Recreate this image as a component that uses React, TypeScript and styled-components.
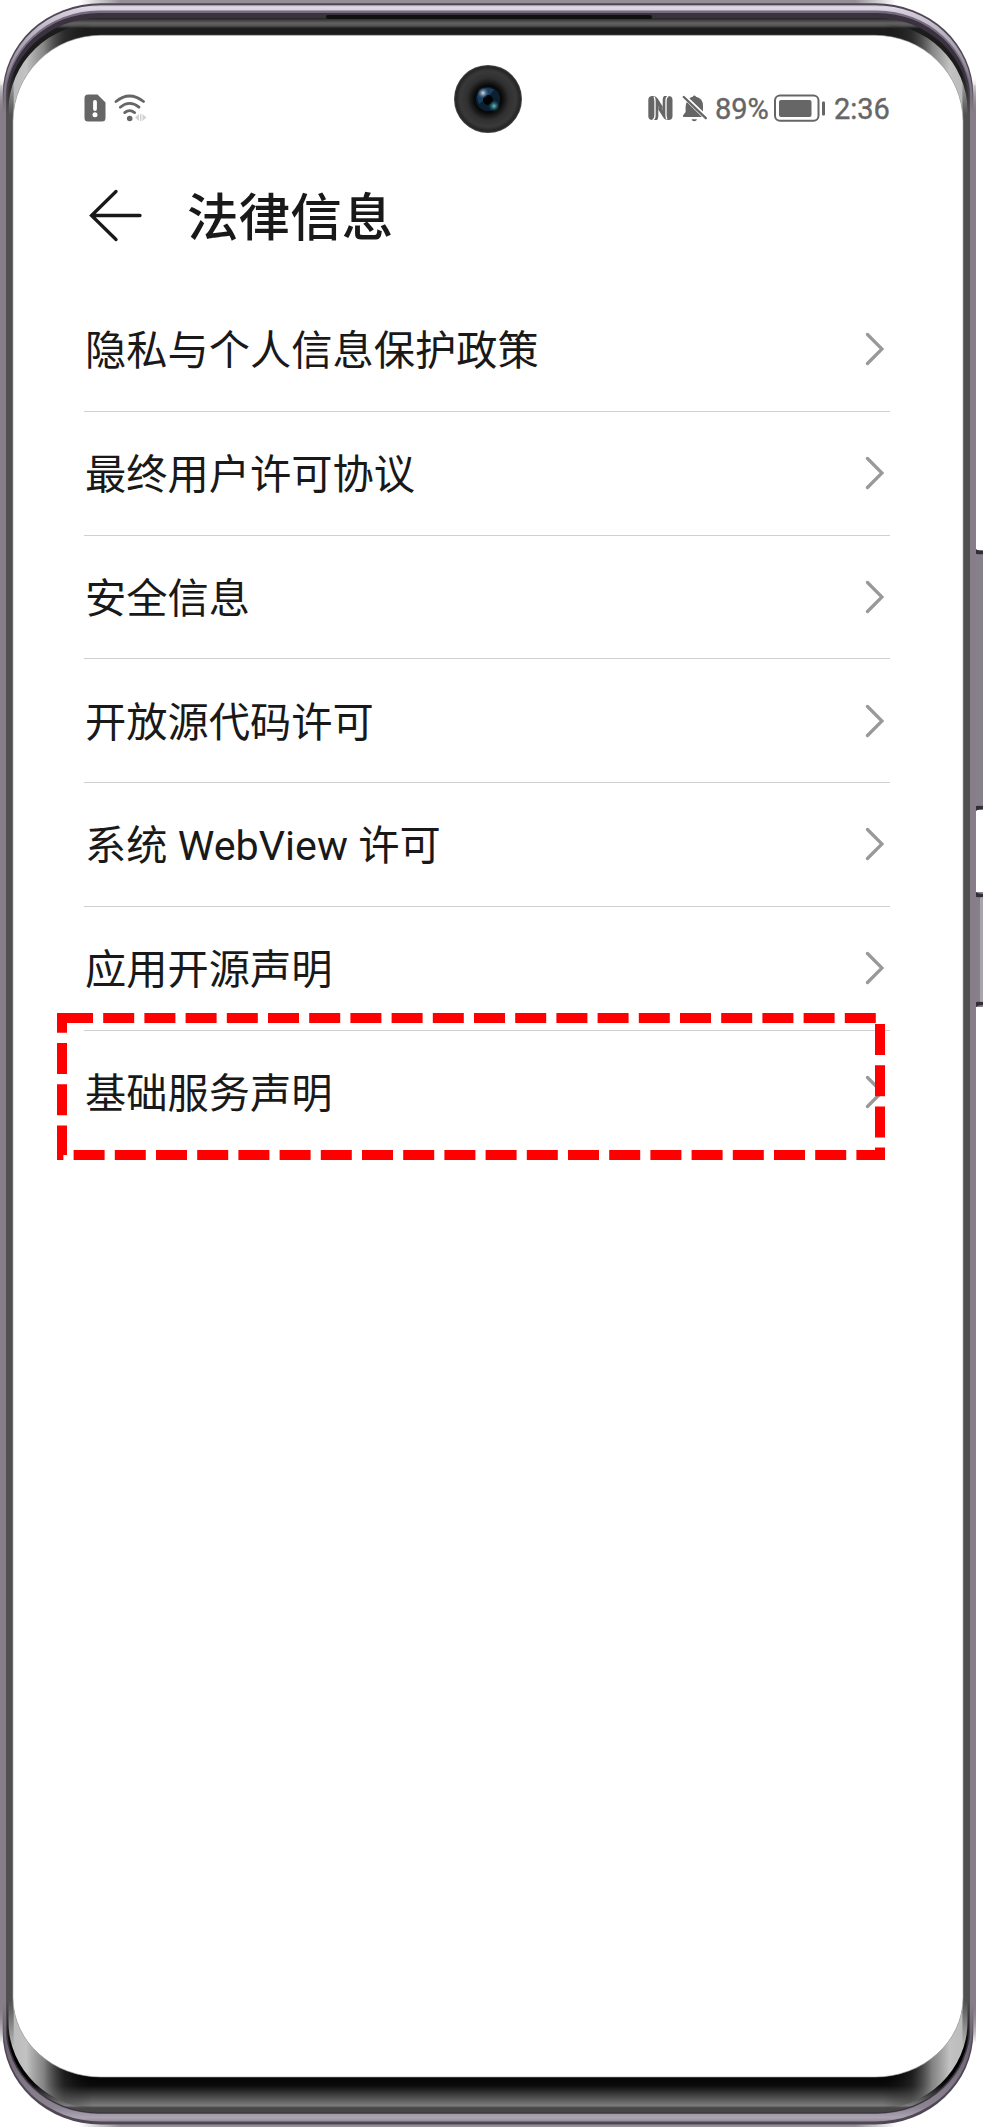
import React from "react";
import styled, { createGlobalStyle } from "styled-components";

const GlobalStyle = createGlobalStyle`
  html, body { margin: 0; padding: 0; background: #fff; }
  body { font-family: Roboto, "Noto Sans CJK SC", sans-serif; color: #191919; overflow: hidden; }
`;

const Phone = styled.main`
  position: relative;
  width: 983px;
  height: 2127px;
  overflow: hidden;
`;

const Shell = styled.svg`
  position: absolute;
  inset: 0;
  display: block;
`;

const Screen = styled.div`
  position: relative;
  box-sizing: border-box;
  width: 976px;
  padding: 91px 86px 0 84px;
`;

const StatusBar = styled.header`
  display: flex;
  justify-content: space-between;
  height: 34px;
`;

const StatusGroup = styled.div`
  display: flex;
  align-items: center;
`;

const StatusIcon = styled.svg<{ $gap?: number }>`
  display: block;
  flex: none;
  margin-right: ${(p) => p.$gap ?? 0}px;
`;

const StatusText = styled.span<{ $width: number }>`
  width: ${(p) => p.$width}px;
  padding-top: 2px;
  font-size: 29px;
  line-height: 34px;
  color: #666;
  -webkit-text-stroke: 0.4px #666;
  white-space: nowrap;
`;

const TitleBar = styled.div`
  display: flex;
  align-items: center;
  height: 80px;
  margin-top: 51px;
`;

const BackIcon = styled.svg`
  display: block;
  flex: none;
  margin-right: 45px;
`;

const Title = styled.h1`
  margin: 0;
  padding-top: 6px;
  font-size: 51.6px;
  font-weight: 500;
  line-height: 80px;
`;

const List = styled.ul`
  list-style: none;
  margin: 32px 0 0;
  padding: 0;
`;

const Row = styled.li`
  box-sizing: border-box;
  display: flex;
  align-items: center;
  justify-content: space-between;
  height: 123.75px;
  padding: 0 6px 0 1px;
  border-bottom: 1px solid #d0d0d0;
  &:last-child { border-bottom: 0; }
`;

const Label = styled.span`
  padding-top: 4px;
  font-size: 41.25px;
  line-height: 60px;
  white-space: nowrap;
`;

const Highlight = styled.svg`
  position: absolute;
  left: 57px;
  top: 1013px;
`;

const Lens = styled.svg`
  position: absolute;
  left: 452px;
  top: 63px;
`;

const items = [
  "隐私与个人信息保护政策",
  "最终用户许可协议",
  "安全信息",
  "开放源代码许可",
  "系统 WebView 许可",
  "应用开源声明",
  "基础服务声明",
];

/* Closed outline of one layer of the case, symmetric about x = 488. */
function outline(l: number, t: number, b: number, rx: number, rt: number, rb: number) {
  const r = 976 - l;
  return `M${l + rx} ${t}H${r - rx}A${rx} ${rt} 0 0 1 ${r} ${t + rt}V${b - rb}A${rx} ${rb} 0 0 1 ${r - rx} ${b}H${l + rx}A${rx} ${rb} 0 0 1 ${l} ${b - rb}V${t + rt}A${rx} ${rt} 0 0 1 ${l + rx} ${t}Z`;
}

function PhoneShell() {
  return (
    <Shell width="983" height="2127" viewBox="0 0 983 2127" aria-hidden="true">
      <defs>
        <linearGradient id="edge" gradientUnits="userSpaceOnUse" x1="80" y1="0" x2="896" y2="0">
          <stop offset="0" stopColor="#948e96" stopOpacity="0" />
          <stop offset=".05" stopColor="#948e96" />
          <stop offset=".95" stopColor="#948e96" />
          <stop offset="1" stopColor="#948e96" stopOpacity="0" />
        </linearGradient>
        <linearGradient id="bulge" gradientUnits="userSpaceOnUse" x1="0" y1="78" x2="0" y2="2044">
          <stop offset="0" stopColor="#857d87" stopOpacity="0" />
          <stop offset=".018" stopColor="#857d87" />
          <stop offset=".98" stopColor="#857d87" />
          <stop offset="1" stopColor="#857d87" stopOpacity="0" />
        </linearGradient>
        <linearGradient id="silver" gradientUnits="userSpaceOnUse" x1="0" y1="0" x2="976" y2="0">
          <stop offset="0" stopColor="#b5b5b5" />
          <stop offset=".027" stopColor="#c2c2c2" />
          <stop offset=".045" stopColor="#999" stopOpacity=".85" />
          <stop offset=".066" stopColor="#444" stopOpacity=".4" />
          <stop offset=".095" stopColor="#111" stopOpacity="0" />
          <stop offset=".905" stopColor="#111" stopOpacity="0" />
          <stop offset=".934" stopColor="#444" stopOpacity=".4" />
          <stop offset=".955" stopColor="#999" stopOpacity=".85" />
          <stop offset=".973" stopColor="#c2c2c2" />
          <stop offset="1" stopColor="#b5b5b5" />
        </linearGradient>
        <linearGradient id="inner" gradientUnits="userSpaceOnUse" x1="0" y1="18" x2="0" y2="2113">
          <stop offset="0" stopColor="#222" />
          <stop offset=".0024" stopColor="#626262" />
          <stop offset=".0036" stopColor="#555" />
          <stop offset=".005" stopColor="#1c1c1c" />
          <stop offset=".98" stopColor="#000" />
          <stop offset=".987" stopColor="#0b0b0b" />
          <stop offset=".9965" stopColor="#7c7c7c" />
          <stop offset=".9975" stopColor="#484848" />
          <stop offset="1" stopColor="#444" />
        </linearGradient>
        <linearGradient id="side" gradientUnits="userSpaceOnUse" x1="0" y1="72" x2="0" y2="2048">
          <stop offset="0" stopColor="#505050" stopOpacity="0" />
          <stop offset=".022" stopColor="#505050" />
          <stop offset=".976" stopColor="#505050" />
          <stop offset="1" stopColor="#505050" stopOpacity="0" />
        </linearGradient>
        <linearGradient id="shine" gradientUnits="userSpaceOnUse" x1="0" y1="5" x2="0" y2="2122">
          <stop offset="0" stopColor="#b9b1bf" />
          <stop offset=".001" stopColor="#e0d9e6" />
          <stop offset=".003" stopColor="#d4ccda" />
          <stop offset=".02" stopColor="#aaa2b1" />
          <stop offset=".045" stopColor="#70687a" />
          <stop offset=".96" stopColor="#675d6b" />
          <stop offset=".993" stopColor="#8d8492" />
          <stop offset=".998" stopColor="#aba4b2" />
          <stop offset="1" stopColor="#8e8695" />
        </linearGradient>
        <clipPath id="ring"><path clipRule="evenodd" d={outline(8.5, 23, 2109, 91, 88, 87) + outline(13, 35.3, 2077, 88, 86, 79)} /></clipPath>
      </defs>
      <rect x="80" y="0" width="816" height="7" fill="url(#edge)" />
      <rect x="80" y="2120" width="816" height="7" fill="url(#edge)" />
      <rect x="0" y="78" width="976" height="1966" fill="url(#bulge)" />
      <g fill="#85808a">
        <rect x="973" y="550" width="10" height="260" />
        <rect x="973" y="892" width="10" height="115" />
        <rect x="980" y="896" width="3" height="107" fill="#aaa4ae" />
      </g>
      <g fill="#342d38">
        <path d="M975 548q2 3 8 3v3q-7 1-8-1zM975 812q2-3 8-3v-3q-7-1-8 1z" />
        <path d="M975 891q2 3 8 3v3q-7 1-8-1zM975 1008q2-3 8-3v-3q-7-1-8 1z" />
      </g>
      <path d={outline(2.7, 3.2, 2124.5, 98, 91, 92)} fill="#4f4754" />
      <path d={outline(3.8, 5.2, 2121.5, 97, 90, 90)} fill="url(#shine)" />
      <path d={outline(5.1, 10.5, 2114, 94, 88, 86)} fill="#746b7c" />
      <path d={outline(5.7, 13, 2113.5, 93, 87, 86)} fill="#3a323f" />
      <path d={outline(7, 18, 2112.5, 92, 87, 86)} fill="url(#inner)" />
      <rect x="8" y="20" width="960" height="2092" fill="url(#silver)" clipPath="url(#ring)" />
      <rect x="0" y="85" width="6.3" height="1956" fill="url(#bulge)" />
      <rect x="969.7" y="85" width="6.3" height="1956" fill="url(#bulge)" />
      <rect x="6.2" y="72" width="7.5" height="1976" fill="url(#side)" />
      <rect x="962.4" y="72" width="7.3" height="1976" fill="url(#side)" />
      <path d={outline(13, 35.3, 2077, 88, 86, 79)} fill="#fff" stroke="#aaa" strokeWidth=".6" />
      <rect x="326" y="15" width="326" height="4" rx="2" fill="#101010" />
    </Shell>
  );
}

function Camera() {
  return (
    <Lens width="72" height="72" viewBox="-36 -36 72 72" aria-hidden="true">
      <defs>
        <radialGradient id="lens">
          <stop offset="0" stopColor="#020405" />
          <stop offset=".4" stopColor="#090909" />
          <stop offset=".62" stopColor="#303030" />
          <stop offset=".82" stopColor="#393939" />
          <stop offset=".95" stopColor="#242424" />
          <stop offset="1" stopColor="#505050" />
        </radialGradient>
        <radialGradient id="glint"><stop stopColor="#e2e2ee" /><stop offset="1" stopColor="#335f8a" stopOpacity="0" /></radialGradient>
        <radialGradient id="teal"><stop stopColor="#6cc4c8" /><stop offset="1" stopColor="#14505c" stopOpacity="0" /></radialGradient>
      </defs>
      <circle r="34" fill="url(#lens)" />
      <circle r="12" fill="#0b2133" />
      <path d="M-11-2A11 11 0 0 1 6-9L0-2L-9 5Z" fill="#224a70" opacity=".7" />
      <circle cy="1" r="5" fill="#010203" />
      <ellipse cx="-5" cy="-6" rx="6" ry="6" fill="url(#glint)" />
      <circle cx="6" cy="7" r="6" fill="url(#teal)" />
    </Lens>
  );
}

function StatusLeft() {
  return (
    <StatusGroup>
      <StatusIcon $gap={8} width="22" height="28" viewBox="0 0 22 28">
        <path fill="#666" fillRule="evenodd" d="M4 .5H13.5L21.5 8.5V24a3.5 3.5 0 0 1-3.5 3.5H4A3.5 3.5 0 0 1 .5 24V4A3.5 3.5 0 0 1 4 .5ZM11 6a1.9 1.9 0 0 0-1.9 2V15a1.9 1.9 0 0 0 3.8 0V8A1.9 1.9 0 0 0 11 6ZM11 18.2a2.5 2.5 0 1 0 0 5a2.5 2.5 0 0 0 0-5Z" />
      </StatusIcon>
      <StatusIcon width="34" height="28" viewBox="0 0 34 28">
        <g fill="none" stroke="#666" strokeWidth="2.8" strokeLinecap="round">
          <path d="M2 7.5Q15.500-3.5 29.500 7.500" />
          <path d="M6.300 13.200Q15.500 5.500 25 13.200" />
          <path d="M10.700 18.600Q15.500 14.600 20.600 18.600" />
        </g>
        <circle cx="15.700" cy="24.500" r="2.800" fill="#666" />
        <path fill="#d2d2d2" d="M25 20v7l-4-3.500zM26 20h1.500v7H26zM28.500 20v7l4-3.500z" />
      </StatusIcon>
    </StatusGroup>
  );
}

function StatusRight() {
  return (
    <StatusGroup>
      <StatusIcon $gap={9} width="25" height="26" viewBox="0 0 25 26">
        <rect x=".3" y="1" width="24.200" height="24" rx="4" fill="#666" />
        <path fill="#fff" d="M10.300 10.500L16.800 21.500Q17.300 23.500 18.300 25.500H8.500Q10.300 24 10.300 21.500ZM14.700 15.500L8.200 4.500Q7.700 2.500 6.700 .5H16.500Q14.700 2 14.700 4.500Z" />
        <path fill="#666" d="M10.300 10.500L14.700 16V15.500L18 21V24.500Q16 24 15 22L10.300 14.500ZM14.700 15.500L10.300 10L7 5V1.500Q9 2 10 4L14.700 11.500Z" />
        <path fill="none" stroke="#fff" strokeWidth="1.300" d="M6 1.500Q7 3.500 7 6V20.500Q7 24 4.500 25M19 24.500Q18 22.500 18 20V5.500Q18 2 20.500 1" />
      </StatusIcon>
      <StatusIcon $gap={8} width="25" height="28" viewBox="0 0 25 28">
        <path fill="#666" d="M7.500 4.500Q9 3 10.700 2.700Q12.400 .2 14.100 2.700Q21 4.200 21 12V17.500ZM4.800 8Q3.600 10 3.600 13V18L1 21.500Q.6 23 2 23H20ZM9.500 25.200H15Q14.500 27.200 12.300 27.200Q10 27.200 9.500 25.200Z" />
        <path d="M1.800 3L23.800 24.200" fill="none" stroke="#666" strokeWidth="2.300" strokeLinecap="round" />
      </StatusIcon>
      <StatusText $width={59}>89%</StatusText>
      <StatusIcon $gap={8} width="52" height="28" viewBox="0 0 52 28">
        <rect x="1" y="1.500" width="43.500" height="25.300" rx="5" fill="none" stroke="#666" strokeWidth="2" />
        <rect x="5" y="6" width="32.500" height="17" rx="2" fill="#666" />
        <rect x="48" y="7.500" width="3" height="14" rx="1" fill="#666" />
      </StatusIcon>
      <StatusText $width={56}>2:36</StatusText>
    </StatusGroup>
  );
}

export default function App() {
  return (
    <Phone>
      <GlobalStyle />
      <PhoneShell />
      <Camera />
      <Screen>
        <StatusBar>
          <StatusLeft />
          <StatusRight />
        </StatusBar>
        <TitleBar>
          <BackIcon width="58" height="54" viewBox="0 0 58 54">
            <path d="M32 2.500L7.500 26.500L32 50.500M8 26.500H56" fill="none" stroke="#191919" strokeWidth="3.300" strokeLinecap="round" />
          </BackIcon>
          <Title>法律信息</Title>
        </TitleBar>
        <List>
          {items.map((text) => (
            <Row key={text}>
              <Label>{text}</Label>
              <svg width="20" height="34" viewBox="0 0 20 34">
                <path d="M3.500 2.500L18 17L3.500 31.500" fill="none" stroke="#999" strokeWidth="3.300" strokeLinecap="round" />
              </svg>
            </Row>
          ))}
        </List>
      </Screen>
      <Highlight width="828" height="147" viewBox="0 0 828 147" aria-hidden="true">
        <rect x="5" y="5" width="818" height="137" fill="none" stroke="#f00" strokeWidth="10" strokeDasharray="31 10.200" />
      </Highlight>
    </Phone>
  );
}
